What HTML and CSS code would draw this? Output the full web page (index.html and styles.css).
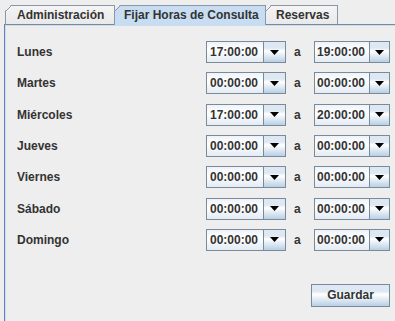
FILE: index.html
```html
<!DOCTYPE html>
<html>

<head>
    <title>Fijar Horas de Consulta</title>

    <link rel="stylesheet" href="styles.css">
</head>

<body>
    <div class="tabs">
        <div class="tab tab-admin">Administración</div>
        <div class="tab tab-selected">Fijar Horas de Consulta</div>
        <div class="tab tab-reservas">Reservas</div>
    </div>

    <div class="panel">
        <div class="schedule">
            <div class="day">Lunes</div>
            <div class="combo"><span class="value">17:00:00</span><span class="arrow"><svg width="9" height="5" viewBox="0 0 9 5"><path d="M0 0H9L4.5 5Z" fill="#000"/></svg></span></div>
            <div class="sep">a</div>
            <div class="combo combo-end"><span class="value">19:00:00</span><span class="arrow"><svg width="9" height="5" viewBox="0 0 9 5"><path d="M0 0H9L4.5 5Z" fill="#000"/></svg></span></div>

            <div class="day">Martes</div>
            <div class="combo"><span class="value">00:00:00</span><span class="arrow"><svg width="9" height="5" viewBox="0 0 9 5"><path d="M0 0H9L4.5 5Z" fill="#000"/></svg></span></div>
            <div class="sep">a</div>
            <div class="combo combo-end"><span class="value">00:00:00</span><span class="arrow"><svg width="9" height="5" viewBox="0 0 9 5"><path d="M0 0H9L4.5 5Z" fill="#000"/></svg></span></div>

            <div class="day">Miércoles</div>
            <div class="combo"><span class="value">17:00:00</span><span class="arrow"><svg width="9" height="5" viewBox="0 0 9 5"><path d="M0 0H9L4.5 5Z" fill="#000"/></svg></span></div>
            <div class="sep">a</div>
            <div class="combo combo-end"><span class="value">20:00:00</span><span class="arrow"><svg width="9" height="5" viewBox="0 0 9 5"><path d="M0 0H9L4.5 5Z" fill="#000"/></svg></span></div>

            <div class="day">Jueves</div>
            <div class="combo"><span class="value">00:00:00</span><span class="arrow"><svg width="9" height="5" viewBox="0 0 9 5"><path d="M0 0H9L4.5 5Z" fill="#000"/></svg></span></div>
            <div class="sep">a</div>
            <div class="combo combo-end"><span class="value">00:00:00</span><span class="arrow"><svg width="9" height="5" viewBox="0 0 9 5"><path d="M0 0H9L4.5 5Z" fill="#000"/></svg></span></div>

            <div class="day">Viernes</div>
            <div class="combo"><span class="value">00:00:00</span><span class="arrow"><svg width="9" height="5" viewBox="0 0 9 5"><path d="M0 0H9L4.5 5Z" fill="#000"/></svg></span></div>
            <div class="sep">a</div>
            <div class="combo combo-end"><span class="value">00:00:00</span><span class="arrow"><svg width="9" height="5" viewBox="0 0 9 5"><path d="M0 0H9L4.5 5Z" fill="#000"/></svg></span></div>

            <div class="day">Sábado</div>
            <div class="combo"><span class="value">00:00:00</span><span class="arrow"><svg width="9" height="5" viewBox="0 0 9 5"><path d="M0 0H9L4.5 5Z" fill="#000"/></svg></span></div>
            <div class="sep">a</div>
            <div class="combo combo-end"><span class="value">00:00:00</span><span class="arrow"><svg width="9" height="5" viewBox="0 0 9 5"><path d="M0 0H9L4.5 5Z" fill="#000"/></svg></span></div>

            <div class="day">Domingo</div>
            <div class="combo"><span class="value">00:00:00</span><span class="arrow"><svg width="9" height="5" viewBox="0 0 9 5"><path d="M0 0H9L4.5 5Z" fill="#000"/></svg></span></div>
            <div class="sep">a</div>
            <div class="combo combo-end"><span class="value">00:00:00</span><span class="arrow"><svg width="9" height="5" viewBox="0 0 9 5"><path d="M0 0H9L4.5 5Z" fill="#000"/></svg></span></div>
        </div>

        <div class="actions">
            <button class="btn">Guardar</button>
        </div>
    </div>
</body>

</html>
```

FILE: styles.css
```css
/* Base */
body {
    margin: 0;
    width: 395px;
    height: 321px;
    overflow: hidden;
    background-color: #eeeeee;
    font-family: "Liberation Sans", Arial, sans-serif;
    font-size: 12px;
    font-weight: bold;
    color: #333333;
}

/* Tabs */
.tabs {
    display: flex;
    padding-left: 5px;
    margin-top: 5px;
    height: 19px;
    position: relative;
    z-index: 1;
}

.tab {
    position: relative;
    box-sizing: border-box;
    height: 19px;
    line-height: 18px;
    padding-left: 10px;
    border: 1px solid #8a97a6;
    border-bottom: none;
    background: linear-gradient(#f4f4f4, #e9e9e9);
    clip-path: polygon(6px 0, 100% 0, 100% 100%, 0 100%, 0 6px);
    white-space: nowrap;
}

.tab:before {
    content: "";
    position: absolute;
    top: -1px;
    left: -1px;
    width: 7px;
    height: 7px;
    background: linear-gradient(to top left, transparent calc(50% - 0.6px), #8a97a6 50%, transparent calc(50% + 0.6px));
}

.tab-admin {
    width: 110px;
    padding-left: 11px;
}

.tab-selected {
    width: 152px;
    height: 20px;
    margin-left: -1px;
    padding-left: 9px;
    background: #c8ddf2;
}

.tab-reservas {
    width: 73px;
    margin-left: -1px;
}

/* Panel */
.panel {
    box-sizing: border-box;
    height: 297px;
    margin-left: 4px;
    padding: 16px 5px 0 12px;
    border-top: 1px solid #7a8a99;
    border-left: 1px solid #6b7fb6;
    box-shadow: inset 1px 1px 0 #c8ddf2;
}

.schedule {
    display: grid;
    grid-template-columns: 189px 80px 28px 76px;
    grid-auto-rows: 22px;
    row-gap: 9.33px;
    align-items: center;
}

.day {
    line-height: 22px;
}

.sep {
    padding-left: 8px;
    line-height: 22px;
}

/* Combo boxes */
.combo {
    display: flex;
    box-sizing: border-box;
    height: 22px;
    border: 1px solid #7a8a99;
}

.combo .value {
    flex: 1;
    padding-left: 3px;
    line-height: 20px;
    background: linear-gradient(#eef3f9, #ffffff 40%, #e3ebf4);
}

.combo .arrow {
    display: flex;
    align-items: center;
    justify-content: center;
    width: 21px;
    border-left: 1px solid #7a8a99;
    background: linear-gradient(#dde8f3 30%, #ffffff 45%, #b8cfe5);
}

.combo-end .value {
    padding-left: 2px;
}

.combo-end .arrow {
    width: 19px;
}

/* Button */
.actions {
    display: flex;
    justify-content: flex-end;
    margin-top: 33px;
}

.btn {
    box-sizing: border-box;
    width: 79px;
    height: 23px;
    padding: 0;
    border: 1px solid #7a8a99;
    background: linear-gradient(#dde8f3 30%, #ffffff 45%, #b8cfe5);
    font-family: "Liberation Sans", Arial, sans-serif;
    font-size: 12px;
    font-weight: bold;
    color: #333333;
}
```
